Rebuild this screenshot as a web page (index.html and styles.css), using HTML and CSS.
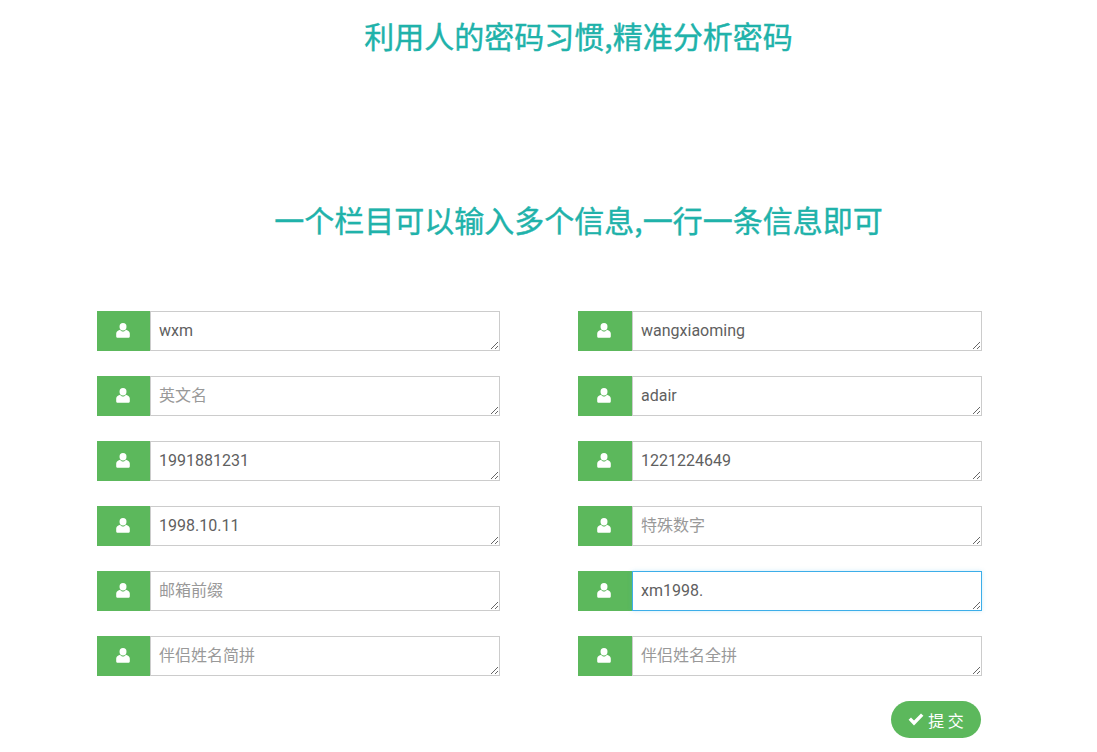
FILE: index.html
```html
<!DOCTYPE html>
<html lang="en">
<head>
    <meta charset="UTF-8">
    <meta name="viewport" content="width=device-width, initial-scale=1.0">
    <title>密码分析</title>
    <link rel="stylesheet" href="styles.css">
</head>
<body>
    <svg class="icon-defs" width="0" height="0" aria-hidden="true">
        <symbol id="icon-user" viewBox="0 0 14 15">
            <ellipse cx="7" cy="3.7" rx="3.5" ry="3.7"/>
            <path d="M4.2 6.8C2.6 7.4.2 8.2.2 10.6v2.6c0 1 .7 1.5 1.6 1.5h10.4c.9 0 1.6-.5 1.6-1.5v-2.6c0-2.4-2.4-3.2-4-3.8C9.400 8 8.200 8.600 7 8.600S4.600 8 4.200 6.800z"/>
        </symbol>
    </svg>

    <h1 class="title title-top">利用人的密码习惯,精准分析密码</h1>
    <h1 class="title title-sub">一个栏目可以输入多个信息,一行一条信息即可</h1>

    <form class="info-form">
        <div class="field-grid">
            <div class="field">
                <span class="field-icon"><svg><use href="#icon-user"/></svg></span>
                <textarea placeholder="姓名简拼">wxm</textarea>
            </div>
            <div class="field">
                <span class="field-icon"><svg><use href="#icon-user"/></svg></span>
                <textarea placeholder="姓名全拼">wangxiaoming</textarea>
            </div>
            <div class="field">
                <span class="field-icon"><svg><use href="#icon-user"/></svg></span>
                <textarea placeholder="英文名"></textarea>
            </div>
            <div class="field">
                <span class="field-icon"><svg><use href="#icon-user"/></svg></span>
                <textarea placeholder="用户名">adair</textarea>
            </div>
            <div class="field">
                <span class="field-icon"><svg><use href="#icon-user"/></svg></span>
                <textarea placeholder="手机号">1991881231</textarea>
            </div>
            <div class="field">
                <span class="field-icon"><svg><use href="#icon-user"/></svg></span>
                <textarea placeholder="QQ号">1221224649</textarea>
            </div>
            <div class="field">
                <span class="field-icon"><svg><use href="#icon-user"/></svg></span>
                <textarea placeholder="生日">1998.10.11</textarea>
            </div>
            <div class="field">
                <span class="field-icon"><svg><use href="#icon-user"/></svg></span>
                <textarea placeholder="特殊数字"></textarea>
            </div>
            <div class="field">
                <span class="field-icon"><svg><use href="#icon-user"/></svg></span>
                <textarea placeholder="邮箱前缀"></textarea>
            </div>
            <div class="field">
                <span class="field-icon"><svg><use href="#icon-user"/></svg></span>
                <textarea class="is-focus" placeholder="常用密码">xm1998.</textarea>
            </div>
            <div class="field">
                <span class="field-icon"><svg><use href="#icon-user"/></svg></span>
                <textarea placeholder="伴侣姓名简拼"></textarea>
            </div>
            <div class="field">
                <span class="field-icon"><svg><use href="#icon-user"/></svg></span>
                <textarea placeholder="伴侣姓名全拼"></textarea>
            </div>
        </div>
        <div class="form-actions">
            <button type="button" class="submit-button">
                <svg viewBox="0 0 16 13"><path d="M.6 6.8 3 4.4 6 7.4 13 .4 15.4 2.800 6 12.400z"/></svg>提 交
            </button>
        </div>
    </form>
</body>
</html>
```

FILE: styles.css
```css
* {
    box-sizing: border-box;
}

html, body {
    height: 752px;
    overflow: hidden;
}

body {
    margin: 0;
    background: #fff;
    color: #5f5f5f;
    font-family: Roboto, "Noto Sans CJK SC", sans-serif;
    font-size: 16px;
}

.icon-defs {
    position: absolute;
}

.title {
    margin: 0;
    padding-left: 60px;
    color: #20b2aa;
    font-family: "Noto Sans CJK SC", sans-serif;
    font-size: 30px;
    font-weight: 400;
    line-height: 40px;
    text-align: center;
    -webkit-text-stroke: 0.4px #20b2aa;
}

.title-top {
    padding-top: 15px;
}

.title-sub {
    margin-top: 144px;
}

.info-form {
    width: 885px;
    margin: 72px 0 0 97px;
}

.field-grid {
    display: grid;
    grid-template-columns: 403px 404px;
    column-gap: 78px;
    row-gap: 25px;
}

.field {
    display: flex;
    height: 40px;
}

.field-icon {
    display: flex;
    flex: 0 0 53px;
    align-items: center;
    justify-content: center;
    padding: 0 1px 1px 0;
    background: #5cb85c;
}

.field:nth-child(even) .field-icon {
    flex-basis: 54px;
    padding-right: 2px;
}

.field-icon svg {
    width: 14px;
    height: 15px;
    fill: #fff;
}

.field textarea {
    flex: 1;
    min-width: 0;
    height: 40px;
    margin: 0;
    padding: 9px 8px 7px;
    border: 1px solid #ccc;
    border-radius: 0;
    outline: none;
    color: #5f5f5f;
    font-family: Roboto, "Noto Sans CJK SC", sans-serif;
    font-size: 16px;
    line-height: 20px;
}

.field textarea::placeholder {
    color: #999;
    opacity: 1;
}

.field textarea.is-focus {
    border-color: #3daee9;
    box-shadow: 0 0 4px rgba(61, 174, 233, 0.25);
}

.form-actions {
    display: flex;
    justify-content: flex-end;
    margin-top: 25px;
    padding-right: 1px;
}

.submit-button {
    display: flex;
    align-items: center;
    justify-content: center;
    gap: 4px;
    width: 90px;
    height: 37px;
    padding: 0;
    border: none;
    border-radius: 19px;
    background: #5cb85c;
    color: #fff;
    font-family: "Noto Sans CJK SC", sans-serif;
    font-size: 16px;
}

.submit-button svg {
    width: 16px;
    height: 13px;
    fill: #fff;
}
```
